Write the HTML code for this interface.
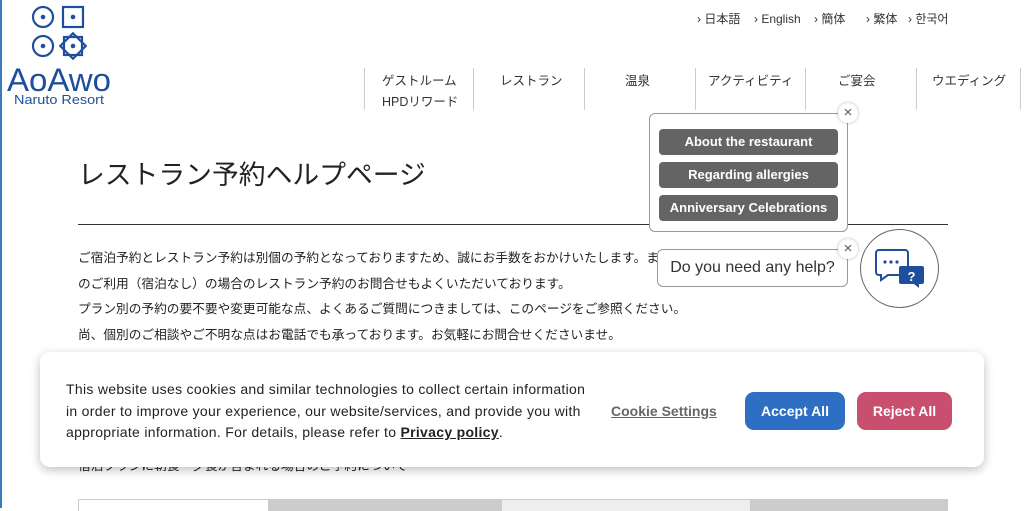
<!DOCTYPE html>
<html><head><meta charset="utf-8"><style>
*{margin:0;padding:0;box-sizing:border-box}
body{width:1024px;height:508px;overflow:hidden;background:#fff;position:relative;font-family:"Liberation Sans","Noto Sans CJK JP",sans-serif;color:#222}
.a{position:absolute;white-space:nowrap}
.lang{top:10px;font-size:12px;line-height:18px;height:18px;color:#333}
.nav{top:71px;font-size:12.5px;color:#333}
.div{position:absolute;top:68px;width:1px;height:42px;background:#ccc}
.p{left:78px;font-size:12.7px;color:#222}
.mbtn{position:absolute;left:659px;width:179px;height:26px;background:#646464;border-radius:4px;color:#fff;font-weight:bold;font-size:13px;text-align:center;line-height:26px}
.x{position:absolute;width:20px;height:20px;border-radius:50%;background:#fff;box-shadow:0 0 3px rgba(0,0,0,.3);color:#555;font-size:15px;text-align:center;line-height:19px}
</style></head><body>
<div style="position:absolute;left:0;top:0;width:2px;height:508px;background:#3a7bc0"></div>
<svg class="a" style="left:0;top:0" width="130" height="110">
<g fill="none" stroke="#1f4f9c" stroke-width="2.2">
<circle cx="43" cy="17" r="10"/><rect x="63" y="7" width="20" height="20"/>
<circle cx="43" cy="46" r="10"/>
<rect x="64" y="37" width="18" height="18"/><rect x="64" y="37" width="18" height="18" transform="rotate(45 73 46)"/>
</g>
<g fill="#1f4f9c"><circle cx="43" cy="17" r="2.3"/><circle cx="73" cy="17" r="2.3"/><circle cx="43" cy="46" r="2.3"/><circle cx="73" cy="46" r="2.3"/></g>
<text x="7" y="91" textLength="104" lengthAdjust="spacingAndGlyphs" font-family="Liberation Sans" font-size="32" fill="#1f4f9c">AoAwo</text>
<text x="14" y="104" textLength="90" lengthAdjust="spacingAndGlyphs" font-family="Liberation Sans" font-size="13" fill="#1f4f9c">Naruto Resort</text>
</svg>
<div class="a lang" style="left:697px">› 日本語</div>
<div class="a lang" style="left:754px">› English</div>
<div class="a lang" style="left:814px">› 簡体</div>
<div class="a lang" style="left:866px">› 繁体</div>
<div class="a lang" style="left:908px">› 한국어</div>
<div class="div" style="left:364px"></div><div class="div" style="left:473px"></div><div class="div" style="left:584px"></div><div class="div" style="left:695px"></div><div class="div" style="left:805px"></div><div class="div" style="left:916px"></div><div class="div" style="left:1020px"></div>
<div class="a nav" style="left:382px;line-height:21px">ゲストルーム<br>HPDリワード</div>
<div class="a nav" style="left:500px;line-height:21px">レストラン</div>
<div class="a nav" style="left:625px;line-height:21px">温泉</div>
<div class="a nav" style="left:708px;line-height:21px">アクティビティ</div>
<div class="a nav" style="left:838px;line-height:21px">ご宴会</div>
<div class="a nav" style="left:932px;line-height:21px">ウエディング</div>
<div class="a" style="left:78px;top:153px;font-size:26.8px;color:#222">レストラン予約ヘルプページ</div>
<div class="a" style="left:78px;top:224px;width:870px;height:1px;background:#333"></div>
<div class="a p" style="top:247px">ご宿泊予約とレストラン予約は別個の予約となっておりますため、誠にお手数をおかけいたします。また、レストランのみ</div>
<div class="a p" style="top:273px">のご利用（宿泊なし）の場合のレストラン予約のお問合せもよくいただいております。</div>
<div class="a p" style="top:298px">プラン別の予約の要不要や変更可能な点、よくあるご質問につきましては、このページをご参照ください。</div>
<div class="a p" style="top:324px">尚、個別のご相談やご不明な点はお電話でも承っております。お気軽にお問合せくださいませ。</div>
<div class="a p" style="top:349px">なお、予約はレストランごとに異なりますので、ご注意ください。</div>
<div class="a p" style="top:455px">宿泊プランに朝食・夕食が含まれる場合のご予約について</div>
<div class="a" style="left:78px;top:499px;width:870px;height:12px;border-top:1px solid #ccc;display:flex">
<div style="width:190px;background:#fff;border-left:1px solid #ccc"></div><div style="width:234px;background:#ccc"></div><div style="width:248px;background:#eee"></div><div style="width:198px;background:#ccc"></div></div>
<div class="a" style="left:40px;top:352px;width:944px;height:115px;background:#fff;border-radius:10px;box-shadow:0 3px 10px rgba(0,0,0,.25)"></div>
<div class="a" style="left:66px;top:379px;font-size:14px;line-height:21.5px;color:#222;font-family:'Liberation Sans Narrow','Liberation Sans',sans-serif;letter-spacing:.3px">This website uses cookies and similar technologies to collect certain information<br>in order to improve your experience, our website/services, and provide you with<br>appropriate information. For details, please refer to <b style="text-decoration:underline">Privacy policy</b>.</div>
<div class="a" style="left:611px;top:403px;font-size:14px;font-weight:bold;color:#666;text-decoration:underline">Cookie Settings</div>
<div class="a" style="left:745px;top:392px;width:100px;height:38px;border-radius:9px;background:#2f6fc3;color:#fff;font-weight:bold;font-size:14px;text-align:center;line-height:38px">Accept All</div>
<div class="a" style="left:857px;top:392px;width:95px;height:38px;border-radius:9px;background:#c84f6e;color:#fff;font-weight:bold;font-size:14px;text-align:center;line-height:38px">Reject All</div>
<div class="a" style="left:649px;top:113px;width:199px;height:119px;background:#fff;border:1px solid #999;border-radius:6px"></div>
<div class="mbtn" style="top:129px">About the restaurant</div>
<div class="mbtn" style="top:162px">Regarding allergies</div>
<div class="mbtn" style="top:195px">Anniversary Celebrations</div>
<div class="x" style="left:838px;top:103px">×</div>
<div class="a" style="left:657px;top:249px;width:191px;height:38px;background:#fff;border:1px solid #999;border-radius:6px;font-size:16px;line-height:36px;text-align:center;color:#333">Do you need any help?</div>
<div class="x" style="left:838px;top:239px">×</div>
<div class="a" style="left:860px;top:229px;width:79px;height:79px;border-radius:50%;border:1px solid #666;background:#fff"></div>
<svg class="a" style="left:860px;top:229px" width="80" height="80">
<path d="M19 21h26a3 3 0 0 1 3 3v19a3 3 0 0 1-3 3H28l-7 5v-5h-2a3 3 0 0 1-3-3V24a3 3 0 0 1 3-3z" fill="#fff" stroke="#1f4f9c" stroke-width="2"/>
<circle cx="25" cy="33" r="1.6" fill="#1f4f9c"/><circle cx="31" cy="33" r="1.6" fill="#1f4f9c"/><circle cx="37" cy="33" r="1.6" fill="#1f4f9c"/>
<path d="M41 37h21a2 2 0 0 1 2 2v14a2 2 0 0 1-2 2h-3v4l-5-4H41a2 2 0 0 1-2-2V39a2 2 0 0 1 2-2z" fill="#1f4f9c"/>
<text x="51.5" y="52" text-anchor="middle" font-family="Liberation Sans" font-weight="bold" font-size="13" fill="#fff">?</text>
</svg>
</body></html>
